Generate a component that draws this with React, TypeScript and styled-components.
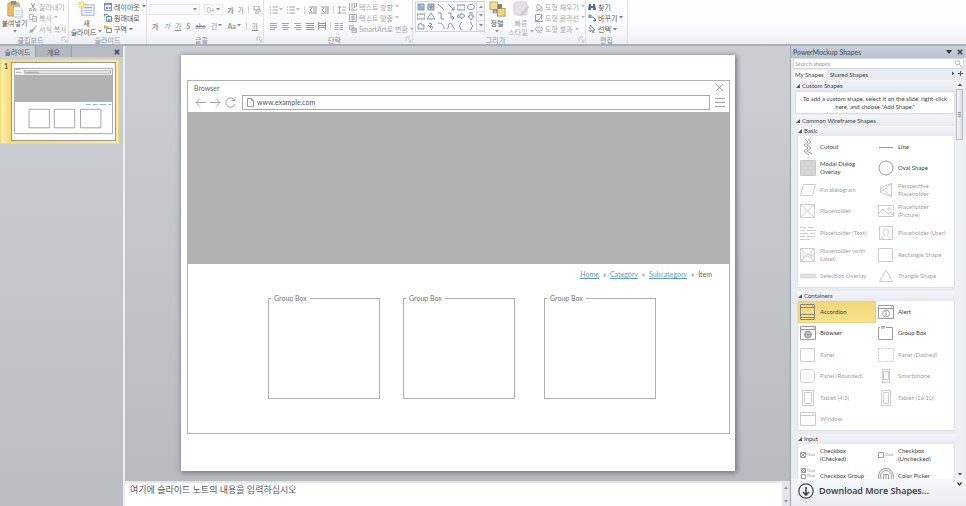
import React from "react";
import styled, { createGlobalStyle } from "styled-components";

const UI = `Lato, "Open Sans", "Noto Sans CJK KR", sans-serif`;
const KR = `Lato, "Noto Sans CJK KR", sans-serif`;

const Global = createGlobalStyle`
  * { box-sizing: border-box; }
  html, body, #root { height: 100%; margin: 0; }
  body { font: 7px/8px ${KR}; color: #444; overflow: hidden; }
  button, input, select { font: inherit; color: inherit; border: 0; padding: 0; margin: 0; background: none; border-radius: 0; }
  svg { display: block; flex: none; }
`;

const Shell = styled.div`
  display: flex;
  flex-direction: column;
  height: 100vh;
  background: #c6cacf;
`;

/* ---------- ribbon ---------- */
const Ribbon = styled.header`
  display: flex;
  height: 46px;
  flex: none;
  background: linear-gradient(#ffffff, #fbfcfd 60%, #eceff3);
  border-bottom: 2px solid #a9b0ba;
`;
const Group = styled.section<{ $w: number }>`
  width: ${(p) => p.$w}px;
  flex: none;
  display: flex;
  flex-direction: column;
  border-right: 1px solid #dcdfe4;
`;
const GroupBody = styled.div<{ $gap?: number }>`
  flex: 1;
  display: flex;
  gap: ${(p) => p.$gap ?? 2}px;
  padding: 1px 2px 0;
  min-height: 0;
`;
const GroupLabel = styled.div`
  height: 9px;
  display: flex;
  align-items: center;
  justify-content: center;
  color: #8a8f98;
  & > span { flex: 1; text-align: center; }
`;
const Launcher = styled.button`
  width: 7px;
  height: 7px;
`;
const Big = styled.button<{ $w: number; $off?: boolean }>`
  width: ${(p) => p.$w}px;
  flex: none;
  display: flex;
  flex-direction: column;
  align-items: center;
  justify-content: flex-start;
  white-space: nowrap;
  color: ${(p) => (p.$off ? "#a9a9a9" : "#525252")};
`;
const Line = styled.span`
  display: flex;
  flex: none;
  align-items: center;
  gap: 2px;
  height: 9px;
`;
const Stack = styled.div`
  flex: 1;
  display: grid;
  grid-template-rows: repeat(3, 1fr);
  min-width: 0;
`;
const Small = styled.button<{ $off?: boolean }>`
  display: flex;
  align-items: center;
  gap: 2px;
  white-space: nowrap;
  color: ${(p) => (p.$off ? "#a6a6a6" : "#525252")};
`;
const Rows = styled.div<{ $w: number }>`
  width: ${(p) => p.$w}px;
  flex: none;
  display: flex;
  flex-direction: column;
  gap: 3px;
  padding-top: 2px;
`;
const Tools = styled.div<{ $gap: number; $pad?: number }>`
  display: flex;
  align-items: center;
  gap: ${(p) => p.$gap}px;
  padding-left: ${(p) => p.$pad ?? 0}px;
  height: 13px;
`;
const Tool = styled.button<{ $bold?: boolean; $italic?: boolean; $under?: boolean; $strike?: boolean }>`
  display: flex;
  align-items: center;
  gap: 1px;
  color: #8c8c8c;
  font-weight: ${(p) => (p.$bold ? 700 : 400)};
  font-style: ${(p) => (p.$italic ? "italic" : "normal")};
  text-decoration: ${(p) => (p.$under ? "underline" : p.$strike ? "line-through" : "none")};
`;
const Sep = styled.i`
  width: 1px;
  height: 8px;
  background: #d0d3d8;
`;
const Combo = styled.button<{ $w: number }>`
  width: ${(p) => p.$w}px;
  height: 11px;
  border: 1px solid #e6e8eb;
  background: #fafafa;
  color: #aaa;
  display: flex;
  align-items: center;
  justify-content: space-between;
  padding: 0 2px;
`;
const Gallery = styled.div`
  display: flex;
  width: 70px;
  height: 31px;
  border: 1px solid #d2d6dc;
  background: #fff;
`;
const GalleryGrid = styled.div`
  flex: 1;
  display: grid;
  grid-template-columns: repeat(6, 1fr);
  place-items: center;
`;
const GalleryScroll = styled.div`
  width: 8px;
  display: grid;
  grid-template-rows: repeat(3, 1fr);
  border-left: 1px solid #d2d6dc;
  background: #f3f5f8;
  & > button { display: grid; place-items: center; border-bottom: 1px solid #dfe2e7; }
`;

const Down = ({ c = "#888" }: { c?: string }) => (
  <svg width="4" height="3" viewBox="0 0 4 3"><path d="M0 0h4L2 2.5z" fill={c} /></svg>
);
const Up = ({ c = "#8b929c" }: { c?: string }) => (
  <svg width="4" height="3" viewBox="0 0 4 3"><path d="M0 3h4L2 .5z" fill={c} /></svg>
);

const PasteIcon = () => (
  <svg width="17" height="17" viewBox="0 0 18 18">
    <rect x="2" y="2" width="12" height="14" rx="1" fill="#edbd62" stroke="#c99744" />
    <rect x="5" y="0" width="6" height="4" rx="1" fill="#8e8e90" />
    <path d="M8 6h6l3 3v8H8z" fill="#fff" stroke="#a3abb8" strokeWidth=".8" />
    <path d="M10 10h5M10 12h5M10 14h5" stroke="#c3cfdf" strokeWidth=".8" />
  </svg>
);
const NewSlideIcon = () => (
  <svg width="17" height="17" viewBox="0 0 18 18">
    <rect x="4" y="4" width="13" height="11" fill="#f3f7fc" stroke="#9cadc4" />
    <path d="M6 7h9" stroke="#c4a578" strokeWidth="1.4" />
    <path d="M6 10h9M6 12h9" stroke="#a8c1df" />
    <path d="M4 0v8M0 4h8M1 1l6 6M7 1L1 7" stroke="#f6d566" strokeWidth="1.4" />
    <circle cx="4" cy="4" r="1.500" fill="#fffbe0" />
  </svg>
);
const ArrangeIcon = () => (
  <svg width="17" height="17" viewBox="0 0 18 18">
    <path d="M6 4h7v7" fill="none" stroke="#8a8a8a" strokeWidth="1.6" />
    <rect x="4" y="4" width="9" height="9" fill="#7c7f84" />
    <rect x="1" y="1" width="8" height="8" fill="#f7e08a" stroke="#a6975a" strokeWidth=".8" />
    <rect x="9" y="8" width="8" height="8" fill="#f3d772" stroke="#988c50" strokeWidth=".8" />
    <rect x="5" y="10" width="3" height="3" fill="#a9bdd6" />
  </svg>
);
const QuickIcon = () => (
  <svg width="17" height="17" viewBox="0 0 18 18">
    <rect x="1" y="1" width="14" height="14" rx="3" fill="#e3e1e5" stroke="#d0ced3" />
    <path d="M16 5l-7 8-2 3 4-2 6-7z" fill="#c9c7cb" />
  </svg>
);

const glyphs: Record<string, React.ReactNode> = {
  cut: <path d="M2 0l3 5M6 0L3 5M2 5.500a1.300 1.300 0 100 2.500 1.300 1.300 0 000-2.500M6 5.500a1.300 1.300 0 100 2.500 1.300 1.300 0 000-2.500" fill="none" stroke="#9a9a9a" />,
  copy: <g fill="#fafafa" stroke="#a8a8a8" strokeWidth=".8"><path d="M.5.500h4v5h-4z" /><path d="M3.500 2.500h4v5h-4zM4.500 4.500h2M4.500 6h2" /></g>,
  brush: <path d="M8 0L4 4 1 5l-1 3 4-1 1-2 3-4z" fill="#a9a9a9" />,
  layout: <g><path d="M.5.500h7v7h-7z" fill="#eaf1fa" stroke="#7f98bb" /><path d="M0 1h8" stroke="#5f7fab" strokeWidth="1.500" /><path d="M2 4h2v2H2zM5 4h1.500v2H5z" fill="#6b91bf" /></g>,
  reset: <g><path d="M2.500 2.500h5v5h-5z" fill="#e6eef8" stroke="#6b87ad" /><path d="M0 3V0l1 1c2-1 4 0 4 2" fill="none" stroke="#2f6fb5" /><path d="M4 5h2v2H4z" fill="#7fa0c8" /></g>,
  section: <g><path d="M2.500 3.500h5v4h-5z" fill="#f7fafe" stroke="#7f93ad" /><path d="M0 1h5v2H0z" fill="#f2c542" /><path d="M1 0v4" stroke="#d99d2b" /></g>,
  dir: <path d="M.5 0v8M3 0v8M5.500 0v5M4 6l1.500 2L7.500 6M7.500 0v4" fill="none" stroke="#a0a0a0" />,
  fit: <path d="M.5.500h7v7h-7zM2 3h4M2 5h4M4 1v6" fill="#f1f1f1" stroke="#adadad" />,
  smart: <g stroke="#a8a8a8" strokeWidth=".8"><path d="M.5.500h4v4h-4zM3 3h4.500v4.500H3z" fill="#ddd" /><path d="M4 5h3" /></g>,
  fill: <g fill="#e9e9e9" stroke="#a9a9a9" strokeWidth=".8"><path d="M3 1l4 3-3 3-3-3zM7 4v3M.5 7.500h7" /></g>,
  outline: <path d="M.5.500h6v5M.5.500v6h3M7.500 1L3 6M0 7.500h8" fill="none" stroke="#a2a2a2" />,
  effect: <g><rect x=".5" y="2" width="7" height="4" rx="2" fill="#eee" stroke="#aaa" /><path d="M2 7.500h5" stroke="#c8c8c8" /></g>,
  find: <g fill="#4c6d9c"><path d="M1 1h2v2h2V1h2l1 6H5V5H3v2H0z" /></g>,
  replace: <g fill="none"><path d="M1 4V1h2v3M1 3h2" stroke="#666" strokeWidth=".9" /><path d="M4 3c2 0 3 1 3 4M5 6l2 1.500L8 5" stroke="#3f77b6" /></g>,
  select: <path d="M2 0v7l1.700-1.600L5 8l1-.5L4.800 5H7z" fill="#fff" stroke="#5b7392" strokeWidth=".8" />,
  bullets: <path d="M0 1h1M0 4h1M0 7h1M2.500 1H8M2.500 4H8M2.500 7H8" stroke="#a3a3a3" />,
  indent: <path d="M0 1h8M4 3h4M4 5h4M0 7h8M3 2L1 4l2 2" fill="none" stroke="#959595" />,
  spacing: <path d="M1.500 0v8M0 2l1.500-2L3 2M0 6l1.500 2L3 6M4 1h4M4 4h4M4 7h4" fill="none" stroke="#a0a0a0" strokeWidth=".9" />,
  lines: <path d="M0 1.500h7M0 3.500h7M0 5.500h7M0 7.500h5" stroke="#a4a4a4" />,
  center: <path d="M0 1.500h7M1 3.500h5M0 5.500h7M1 7.500h5" stroke="#a4a4a4" />,
  right: <path d="M0 1.500h7M2 3.500h5M0 5.500h7M2 7.500h5" stroke="#a4a4a4" />,
  full: <path d="M0 1.500h8M0 3.500h8M0 5.500h8M0 7.500h8" stroke="#969696" strokeWidth="1.200" />,
  dist: <path d="M.5 0v8M7.500 0v8M1 1.500h6M1 3.500h6M1 5.500h6" stroke="#969696" />,
  cols: <path d="M0 1.500h3.500M0 3.500h3.500M0 5.500h3.500M0 7.500h3.500M4.500 1.500H8M4.500 3.500H8M4.500 5.500H8M4.500 7.500H8" stroke="#a8a8a8" />,
  erase: <g><path d="M1 0h5v4H1z" fill="none" stroke="#a3a3a3" /><path d="M4 4l3-1 1 2-4 3-2-1z" fill="#ddd" stroke="#a3a3a3" strokeWidth=".7" /></g>,
  launch: <path d="M1 5V1h4M3 3l3 3M6 3.500V6H3.500" fill="none" stroke="#b9bec6" strokeWidth=".8" />,
};
const G = ({ n }: { n: string }) => <svg width="8" height="8" viewBox="0 0 8 8">{glyphs[n]}</svg>;

const galleryShapes = [
  "M1 1h6v6H1zM2 3h2M2 5h4", "M1 1h6v6H1zM4 2v4M2 4h4", "M1 1l6 6", "M1 1l6 6M7 4v3H4", "M0 2h8v5H0z", "M4 1.500c5 0 5 5 0 5s-5-5 0-5",
  "M0 2h8v5H0z", "M4 1l4 6H0z", "M1 1h3v6h3", "M1 1h3v5h3M5 4l2 2-2 2", "M0 3h4V1l4 3-4 3V5H0z", "M3 0h2v4h2L4 8 1 4h2z",
  "M1 7V3l3-2 1 2h2v4z", "M2 1l3 1-2 2 3 1-2 3M1 3l3 3", "M1 1c4 0 6 2 6 6", "M0 7c2 0 1-6 3-6s3 6 5 6", "M5 0C3 0 4 4 2 4c2 0 1 4 3 4", "M3 0c2 0 1 4 3 4-2 0-1 4-3 4",
];
const openShapes = [2, 3, 8, 9, 14, 15, 16, 17];

const StackBtn = ({ n, t, off, arrow }: { n: string; t: string; off?: boolean; arrow?: boolean }) => (
  <Small $off={off}><G n={n} /><span>{t}</span>{arrow && <Down c={off ? "#bbb" : "#777"} />}</Small>
);
const Label = ({ t, launch }: { t: string; launch?: boolean }) => (
  <GroupLabel><span>{t}</span>{launch && <Launcher aria-label={t}><svg width="7" height="7" viewBox="0 0 7 7">{glyphs.launch}</svg></Launcher>}</GroupLabel>
);

/* ---------- workspace ---------- */
const Workspace = styled.main`
  flex: 1;
  display: flex;
  min-height: 0;
`;
const Outline = styled.aside`
  width: 123px;
  flex: none;
  background: linear-gradient(#ccd0d5, #babdc2);
`;
const OutlineTabs = styled.div`
  height: 11px;
  display: flex;
  background: #b6bbc3;
`;
const OutlineTab = styled.button<{ $on?: boolean; $w: number }>`
  width: ${(p) => p.$w}px;
  background: ${(p) => (p.$on ? "#cdd1d7" : "#b1b7bf")};
  border-right: 1px solid #959ca6;
  color: #4c525b;
`;
const TabClose = styled.button`
  margin-left: auto;
  width: 12px;
  display: grid;
  place-items: center;
`;
const ThumbRow = styled.div`
  margin: 2px 4px 0 0;
  height: 85px;
  padding: 2px;
  display: flex;
  border: 1px solid #f0d979;
  background: linear-gradient(90deg, #fdf0b4, #f8da74 8%, #fbe9a8);
`;
const ThumbNo = styled.span`
  width: 8px;
  font-weight: 700;
  color: #555;
  padding: 0 0 0 1px;
`;
const Thumb = styled.div`
  flex: 1;
  background: #fff;
  border: 1px solid #979797;
  & > svg { width: 100%; height: 100%; }
`;
const Center = styled.div`
  flex: 1;
  min-width: 0;
  display: flex;
  flex-direction: column;
  border-left: 2px solid #eceef0;
  border-right: 1px solid #9ea4ac;
`;
const Canvas = styled.div`
  flex: 1;
  display: flex;
  min-height: 0;
  padding: 9px 55px 10px 56px;
  background: linear-gradient(#cbcfd4, #b8bbc0);
`;
const Slide = styled.article`
  flex: 1;
  display: flex;
  padding: 25px 5px 37px 6px;
  background: #fff;
  box-shadow: 1px 1px 5px 1px #777c82;
`;
const Browser = styled.section`
  flex: 1;
  display: flex;
  flex-direction: column;
  border: 1px solid #b0b0b0;
  font-family: ${UI};
  color: #666;
`;
const TitleBar = styled.div`
  height: 13px;
  display: flex;
  align-items: center;
  justify-content: space-between;
  padding: 0 5px 0 6px;
`;
const AddressBar = styled.div`
  height: 18px;
  display: flex;
  align-items: center;
  padding: 0 4px 2px 7px;
  gap: 5px;
`;
const Nav = styled.div`
  display: flex;
  gap: 4px;
  width: 42px;
`;
const Address = styled.label`
  flex: 1;
  height: 15px;
  display: flex;
  align-items: center;
  gap: 3px;
  padding-left: 4px;
  border: 1px solid #a9a9a9;
  & > input { flex: 1; outline: 0; color: #555; }
`;
const Hero = styled.div`
  height: 152px;
  background: #b2b2b2;
`;
const Crumbs = styled.nav`
  display: flex;
  justify-content: flex-end;
  gap: 4px;
  padding: 6px 17px 0 0;
  & > a { color: #5f9cc5; }
`;
const Boxes = styled.div`
  display: grid;
  grid-template-columns: 135fr 141fr 112fr;
  padding: 16px 73px 0 80px;
`;
const Box = styled.fieldset`
  width: 112px;
  height: 105px;
  margin: 0;
  padding: 0 2px;
  border: 1px solid #aeaeae;
  & > legend { padding: 0 3px; line-height: 9px; color: #757575; }
`;
const Notes = styled.div`
  height: 25px;
  flex: none;
  display: flex;
  background: #fff;
  border-top: 2px solid #e4e7ea;
  & > p { flex: 1; margin: 0; padding: 1px 5px; font-size: 9px; line-height: 12px; color: #555; }
`;
const NotesScroll = styled.div`
  width: 8px;
  background: #e3e6ea;
  display: flex;
  flex-direction: column;
  justify-content: space-between;
  align-items: center;
  padding: 3px 0;
`;

/* ---------- shapes pane ---------- */
const Pane = styled.aside`
  width: 175px;
  flex: none;
  display: flex;
  flex-direction: column;
  background: #e9edf2;
  font-family: ${UI};
  font-size: 6px;
  color: #3c3c3c;
`;
const PaneTitle = styled.div`
  height: 12px;
  display: flex;
  align-items: center;
  gap: 5px;
  padding: 0 3px 0 2px;
  background: linear-gradient(#c9d0da, #bac3cf);
  color: #3b4b61;
  font-size: 7px;
  & > span { flex: 1; }
`;
const Search = styled.label`
  height: 11px;
  margin: 0 2px;
  display: flex;
  align-items: center;
  background: #fff;
  border: 1px solid #d3d8df;
  padding: 0 1px;
  & > input { flex: 1; outline: 0; font-style: italic; }
  & > input::placeholder { color: #a0a0a0; opacity: 1; }
`;
const PaneTabs = styled.div`
  height: 11px;
  display: flex;
  align-items: stretch;
  padding: 1px 3px 0 2px;
  & > i { flex: 1; }
`;
const PaneTab = styled.button<{ $on?: boolean }>`
  padding: 0 2px;
  background: ${(p) => (p.$on ? "#fbfcfd" : "transparent")};
  margin-right: 2px;
`;
const ListArea = styled.div`
  flex: 1;
  min-height: 0;
  display: flex;
  padding: 0 2px 0 4px;
`;
const List = styled.div`
  flex: 1;
  min-width: 0;
  overflow: hidden;
`;
const Head = styled.button<{ $in?: boolean }>`
  width: ${(p) => (p.$in ? "calc(100% - 2px)" : "100%")};
  height: ${(p) => (p.$in ? 10 : 11)}px;
  margin-left: ${(p) => (p.$in ? 2 : 0)}px;
  display: flex;
  align-items: center;
  gap: 2px;
  padding: 0 1px;
  background: linear-gradient(#f4f6f9, #e6eaf0);
`;
const Hint = styled.p`
  margin: 0 0 1px;
  padding: 3px 0;
  height: 23px;
  background: #fff;
  border: 1px solid #d9dee5;
  text-align: center;
`;
const Items = styled.div<{ $h: number }>`
  height: ${(p) => p.$h}px;
  margin: 0 0 3px 2px;
  display: grid;
  grid-template-columns: 1fr 1fr;
  grid-auto-rows: 1fr;
  background: #fff;
  border: 1px solid #dde2e8;
  border-top: 0;
`;
const Item = styled.button<{ $dim?: boolean; $on?: boolean }>`
  display: flex;
  align-items: center;
  gap: 4px;
  padding: 0 0 0 2px;
  min-width: 0;
  text-align: left;
  line-height: 8px;
  background: ${(p) => (p.$on ? "linear-gradient(#f3d679, #fae38f)" : "none")};
  box-shadow: ${(p) => (p.$on ? "inset 0 0 0 1px #ecd077" : "none")};
  & > * { opacity: ${(p) => (p.$dim ? 0.5 : 1)}; }
  & > span { white-space: pre-line; }
`;
const Scroll = styled.div`
  width: 9px;
  display: flex;
  flex-direction: column;
  align-items: center;
  background: #eef1f4;
  padding: 3px 0;
`;
const Knob = styled.div`
  width: 7px;
  height: 51px;
  margin: 3px 0 auto;
  border: 1px solid #b4bac3;
  background: linear-gradient(90deg, #f7f8fa, #d9dde3);
  display: grid;
  place-items: center;
`;
const More = styled.button`
  height: 27px;
  flex: none;
  display: flex;
  align-items: center;
  gap: 5px;
  padding: 0 4px 3px 7px;
  font-family: "Open Sans", sans-serif;
  font-size: 9px;
  font-weight: 600;
  color: #333;
  background: linear-gradient(#f5f7f9, #e9edf2);
  & > span { flex: 1; text-align: left; }
  & > svg:last-child { align-self: flex-start; margin-top: 3px; }
`;

const CheckWord = ({ y }: { y: number }) => (
  <text x="7" y={y} fontSize="3" fill="#8a8a8a" stroke="none" fontFamily="Lato">Check</text>
);
const shapes: Record<string, React.ReactNode> = {
  cutout: <path d="M5 0l3 3-4 3 4 3-4 3 5 4M8 0l3 3-4 3 4 3-4 3 5 3" />,
  line: <path d="M1 8.500h14" />,
  modal: <path d="M.5.500h15v15H.5z" fill="#d4d4d4" stroke="#cbcbcb" />,
  oval: <circle cx="8" cy="8" r="7" />,
  para: <path d="M3.500 2.500h12l-3 11H.5z" />,
  persp: <path d="M2.500 5.500l11-4v13l-11-4zM2.500 5.500l11 9M2.500 10.500l11-9" />,
  ph: <path d="M.5 1.500h14v13H.5zM.5 1.500l14 13M14.500 1.500l-14 13" />,
  pic: <><path d="M.5 2.500h15v11H.5zM1 10l4-4 5 5 2-2 3 3" /><circle cx="11" cy="6" r="1.200" /></>,
  text: <path d="M0 2.500h6M8 2.500h6M0 5.500h5M7 5.500h9M0 8.500h8M10 8.500h5M0 11.500h5M7 11.500h8M0 14.500h10" />,
  user: <path d="M1.500 1.500h13v13h-13zM4 14c0-3 3-2 3-4-2-1-2-6 1-6s3 5 1 6c0 2 3 1 3 4" />,
  lab: <><path d="M.5 1.500h14v13H.5zM1 2l4 4M14 2l-4 4M1 14l4-4M14 14l-4-4" /><text x="8" y="10" fontSize="5" textAnchor="middle" fill="#777" stroke="none" fontFamily="Lato">Label</text></>,
  rect: <path d="M.5 1.500h14v13H.5z" />,
  sel: <path d="M.5 6h15v4H.5z" fill="#c4c4c4" stroke="#b9b9b9" />,
  tri: <path d="M8 2l6.500 11.500h-13z" />,
  acc: <path d="M.5.500h14v15H.5zM.5 3.500h14M.5 10.500h14M.5 13.500h14M12 2h1" stroke="#858585" />,
  alert: <><path d="M.5 1.500h15v13H.5zM.5 4.500h15M13 3h1" /><circle cx="8" cy="9.500" r="3.500" /><path d="M8 7v1M8 8.500v3" strokeWidth="1.300" /></>,
  browser: <><path d="M.5 1.500h15v13H.5zM.5 4.500h15M13 3h1" /><circle cx="8" cy="9.500" r="3.500" fill="#ccc" /><path d="M4.500 9.500h7M8 6v7M6 7c-.8 2-.8 4 0 5M10 7c.8 2 .8 4 0 5" strokeWidth=".8" /></>,
  group: <path d="M2 2.500H.5v12h14v-12H8M3 1.500h4M3 3h4" />,
  dashed: <path d="M.5 1.500h15v13H.5z" strokeDasharray="2 1" />,
  round: <rect x=".5" y="1.500" width="14" height="13" rx="3" />,
  phone: <path d="M4.500 1.500h7v13h-7zM5.500 3.500h5v8h-5zM7.500 13h1" />,
  tablet: <path d="M2.500.500h11v15h-11zM4.500 2.500h7v11h-7z" />,
  tablet2: <path d="M3.500.500h9v15h-9zM5.500 2.500h5v11h-5z" />,
  window: <path d="M.5 1.500h15v13H.5zM.5 4.500h15M13 3h1" />,
  chk: <><path d="M.5 5.500h5v5h-5zM1 6l4 4M5 6l-4 4" /><CheckWord y={9} /></>,
  unchk: <><path d="M.5 5.500h5v5h-5z" /><CheckWord y={9} /></>,
  chkg: <><path d="M1.500.500h4v4h-4zM2 1l3 3M5 1L2 4M1.500 6.500h4v4h-4z" /><CheckWord y={4} /><CheckWord y={9} /></>,
  color: <><circle cx="8" cy="8" r="7.500" /><circle cx="8" cy="8" r="5.500" /><path d="M5.500 13V6.500h5V13M8 6v6" /></>,
};

type Entry = [string, string, boolean?];
const basic: Entry[] = [
  ["cutout", "Cutout"], ["line", "Line"], ["modal", "Modal Dialog\nOverlay"], ["oval", "Oval Shape"],
  ["para", "Parallelogram", true], ["persp", "Perspective\nPlaceholder", true], ["ph", "Placeholder", true], ["pic", "Placeholder\n(Picture)", true],
  ["text", "Placeholder (Text)", true], ["user", "Placeholder (User)", true], ["lab", "Placeholder (with\nLabel)", true], ["rect", "Rectangle Shape", true],
  ["sel", "Selection Overlay", true], ["tri", "Triangle Shape", true],
];
const containers: Entry[] = [
  ["acc", "Accordion"], ["alert", "Alert"], ["browser", "Browser"], ["group", "Group Box"],
  ["rect", "Panel", true], ["dashed", "Panel (Dashed)", true], ["round", "Panel (Rounded)", true], ["phone", "Smartphone", true],
  ["tablet", "Tablet (4:3)", true], ["tablet2", "Tablet (16:10)", true], ["window", "Window", true],
];
const inputs: Entry[] = [
  ["chk", "Checkbox\n(Checked)"], ["unchk", "Checkbox\n(Unchecked)"], ["chkg", "Checkbox Group"], ["color", "Color Picker"],
];

const Heading = ({ t, inner }: { t: string; inner?: boolean }) => (
  <Head $in={inner}>
    <svg width="4" height="4" viewBox="0 0 4 4"><path d="M4 0v4H0z" fill="#555" /></svg>
    <span>{t}</span>
  </Head>
);
const ItemGrid = ({ list, h, selected }: { list: Entry[]; h: number; selected?: string }) => (
  <Items $h={h}>
    {list.map(([icon, text, dim]) => (
      <Item key={text} $dim={dim} $on={text === selected}>
        <svg width="16" height="16" viewBox="0 0 16 16" fill="none" stroke="#9a9a9a" strokeWidth="1">{shapes[icon]}</svg>
        <span>{text}</span>
      </Item>
    ))}
  </Items>
);
const Cross = ({ s, c, w = 1 }: { s: number; c: string; w?: number }) => (
  <svg width={s} height={s} viewBox="0 0 8 8" fill="none" stroke={c} strokeWidth={w}><path d="M1 1l6 6M7 1L1 7" /></svg>
);

export default function App() {
  return (
    <Shell>
      <Global />
      <Ribbon>
        <Group $w={69}>
          <GroupBody>
            <Big $w={25}><PasteIcon /><Line>붙여넣기</Line><Line><Down /></Line></Big>
            <Stack>
              <StackBtn n="cut" t="잘라내기" off />
              <StackBtn n="copy" t="복사" off arrow />
              <StackBtn n="brush" t="서식 복사" off />
            </Stack>
          </GroupBody>
          <Label t="클립보드" launch />
        </Group>
        <Group $w={78}>
          <GroupBody>
            <Big $w={31}><NewSlideIcon /><Line>새</Line><Line>슬라이드<Down /></Line></Big>
            <Stack>
              <StackBtn n="layout" t="레이아웃" arrow />
              <StackBtn n="reset" t="원래대로" />
              <StackBtn n="section" t="구역" arrow />
            </Stack>
          </GroupBody>
          <Label t="슬라이드" />
        </Group>
        <Group $w={117}>
          <GroupBody>
            <Rows $w={112}>
              <Tools $gap={4}>
                <Combo $w={53} aria-label="글꼴"><span /><Down /></Combo>
                <Combo $w={20} aria-label="글꼴 크기"><span>0+</span><Down /></Combo>
                <Tool $bold>가</Tool><Tool>가</Tool><Sep /><Tool aria-label="서식 지우기"><G n="erase" /></Tool>
              </Tools>
              <Tools $gap={5} $pad={3}>
                <Tool $bold>가</Tool><Tool $italic>가</Tool><Tool $under>가</Tool><Tool $bold>S</Tool>
                <Tool $strike>abc</Tool><Tool>간<Down /></Tool><Tool $bold>Aa<Down /></Tool><Sep /><Tool $under>가</Tool>
              </Tools>
            </Rows>
          </GroupBody>
          <Label t="글꼴" launch />
        </Group>
        <Group $w={149}>
          <GroupBody $gap={2}>
            <Rows $w={81}>
              <Tools $gap={4} $pad={4}>
                <Tool aria-label="글머리 기호"><G n="bullets" /><Down c="#bbb" /></Tool><Tool aria-label="번호 매기기"><G n="bullets" /><Down c="#bbb" /></Tool><Sep />
                <Tool aria-label="내어쓰기"><G n="indent" /></Tool><Tool aria-label="들여쓰기"><G n="indent" /></Tool><Sep /><Tool aria-label="줄 간격"><G n="spacing" /></Tool>
              </Tools>
              <Tools $gap={4} $pad={4}>
                {["lines", "center", "right", "full", "dist"].map((n) => <Tool key={n} aria-label={n}><G n={n} /></Tool>)}
                <Sep /><Tool aria-label="단"><G n="cols" /></Tool>
              </Tools>
            </Rows>
            <Stack>
              <StackBtn n="dir" t="텍스트 방향" off arrow />
              <StackBtn n="fit" t="텍스트 맞춤" off arrow />
              <StackBtn n="smart" t="SmartArt로 변환" off arrow />
            </Stack>
          </GroupBody>
          <Label t="단락" launch />
        </Group>
        <Group $w={173}>
          <GroupBody>
            <Gallery>
              <GalleryGrid>
                {galleryShapes.map((d, i) => (
                  <svg key={i} width="8" height="8" viewBox="0 0 8 8" fill={i < 2 ? "#b9cbe2" : "#f5f9fe"} fillOpacity={openShapes.includes(i) ? 0 : 1} stroke="#6f86a6" strokeWidth=".9"><path d={d} /></svg>
                ))}
              </GalleryGrid>
              <GalleryScroll>
                <button aria-label="위로"><Up /></button><button aria-label="아래로"><Down /></button><button aria-label="자세히"><Down /></button>
              </GalleryScroll>
            </Gallery>
            <Big $w={20}><ArrangeIcon /><Line>정렬</Line><Line><Down /></Line></Big>
            <Big $w={24} $off><QuickIcon /><Line>빠른</Line><Line>스타일<Down c="#aaa" /></Line></Big>
            <Stack>
              <StackBtn n="fill" t="도형 채우기" off arrow />
              <StackBtn n="outline" t="도형 윤곽선" off arrow />
              <StackBtn n="effect" t="도형 효과" off arrow />
            </Stack>
          </GroupBody>
          <Label t="그리기" launch />
        </Group>
        <Group $w={42}>
          <GroupBody>
            <Stack>
              <StackBtn n="find" t="찾기" />
              <StackBtn n="replace" t="바꾸기" arrow />
              <StackBtn n="select" t="선택" arrow />
            </Stack>
          </GroupBody>
          <Label t="편집" />
        </Group>
      </Ribbon>

      <Workspace>
        <Outline>
          <OutlineTabs>
            <OutlineTab $on $w={36}>슬라이드</OutlineTab>
            <OutlineTab $w={36}>개요</OutlineTab>
            <TabClose aria-label="닫기"><Cross s={6} c="#444" w={2} /></TabClose>
          </OutlineTabs>
          <ThumbRow>
            <ThumbNo>1</ThumbNo>
            <Thumb>
              <svg viewBox="0 0 106 79" preserveAspectRatio="none" fill="none" stroke="#8d8d8d" strokeWidth=".8">
                <path d="M2.500 5.500h101v67h-101z" />
                <path d="M12.500 8h89v2.500h-89zM4 9.500h6M14 9.500h14M102 7l1 1M3.500 6.500h5" />
                <path d="M2.500 12h101v28h-101z" fill="#b2b2b2" stroke="none" />
                <path d="M76 42.500h5M83 42.500h5M90 42.500h7" stroke="#5f9cc5" />
                <path d="M99 42.500h3" />
                <path d="M17.500 47.500h21v19h-21zM43.500 47.500h21v19h-21zM70.500 47.500h21v19h-21z" />
              </svg>
            </Thumb>
          </ThumbRow>
        </Outline>

        <Center>
          <Canvas>
            <Slide>
              <Browser>
                <TitleBar><span>Browser</span><Cross s={9} c="#a8a8a8" /></TitleBar>
                <AddressBar>
                  <Nav>
                    <svg width="11" height="11" viewBox="0 0 11 11" fill="none" stroke="#a2a2a2"><path d="M11 5.500H1M5 1.500l-4 4 4 4" /></svg>
                    <svg width="11" height="11" viewBox="0 0 11 11" fill="none" stroke="#a2a2a2"><path d="M0 5.500h10M6 1.500l4 4-4 4" /></svg>
                    <svg width="11" height="11" viewBox="0 0 11 11" fill="none" stroke="#a2a2a2"><path d="M9.500 3A4.700 4.700 0 1010 7M10 0v3.500H6.500" /></svg>
                  </Nav>
                  <Address>
                    <svg width="7" height="9" viewBox="0 0 7 9" fill="none" stroke="#8c8c8c" strokeWidth=".9"><path d="M.5.500h4l2 2v6h-6zM4.500.500v2h2" /></svg>
                    <input aria-label="Address" defaultValue="www.example.com" />
                  </Address>
                  <svg width="10" height="9" viewBox="0 0 10 9" stroke="#a2a2a2"><path d="M0 .5h10M0 4.500h10M0 8.500h10" /></svg>
                </AddressBar>
                <Hero />
                <Crumbs>
                  <a href="#home">Home</a><span>»</span><a href="#category">Category</a><span>»</span><a href="#subcategory">Subcategory</a><span>»</span><span>Item</span>
                </Crumbs>
                <Boxes>
                  {[1, 2, 3].map((n) => <Box key={n}><legend>Group Box</legend></Box>)}
                </Boxes>
              </Browser>
            </Slide>
          </Canvas>
          <Notes>
            <p>여기에 슬라이드 노트의 내용을 입력하십시오</p>
            <NotesScroll><Up /><Down c="#8b929c" /></NotesScroll>
          </Notes>
        </Center>

        <Pane>
          <PaneTitle>
            <span>PowerMockup Shapes</span>
            <svg width="6" height="4" viewBox="0 0 6 4"><path d="M0 0h6L3 4z" fill="#333" /></svg>
            <Cross s={6} c="#444" w={2} />
          </PaneTitle>
          <Search>
            <input aria-label="Search shapes" placeholder="Search shapes" />
            <svg width="7" height="7" viewBox="0 0 7 7" fill="none" stroke="#aaa" strokeWidth=".9"><circle cx="2.700" cy="2.700" r="2.200" /><path d="M4.500 4.500L7 7" /></svg>
          </Search>
          <PaneTabs>
            <PaneTab $on>My Shapes</PaneTab><PaneTab>Shared Shapes</PaneTab><i />
            <svg width="12" height="8" viewBox="0 0 12 8"><path d="M1 1.500v4l2.500-2z" fill="#555" /><path d="M9.500 1v5M7 3.500h5" stroke="#555" /></svg>
          </PaneTabs>
          <ListArea>
            <List>
              <Heading t="Custom Shapes" />
              <Hint>To add a custom shape, select it on the slide, right-click<br />here, and choose "Add Shape."</Hint>
              <Heading t="Common Wireframe Shapes" />
              <Heading t="Basic" inner />
              <ItemGrid list={basic} h={152} />
              <Heading t="Containers" inner />
              <ItemGrid list={containers} h={130} selected="Accordion" />
              <Heading t="Input" inner />
              <ItemGrid list={inputs} h={44} />
            </List>
            <Scroll>
              <Up c="#444" />
              <Knob><svg width="3" height="5" viewBox="0 0 3 5" stroke="#8b929c"><path d="M0 .5h3M0 2.500h3M0 4.500h3" /></svg></Knob>
              <Down c="#444" />
            </Scroll>
          </ListArea>
          <More>
            <svg width="16" height="16" viewBox="0 0 16 16" fill="none" stroke="#444" strokeWidth="1.200"><circle cx="8" cy="8" r="7.200" /><path d="M8 4v8M5 9l3 3 3-3" strokeWidth="1.600" /></svg>
            <span>Download More Shapes...</span>
            <svg width="5" height="4" viewBox="0 0 5 4" fill="none" stroke="#333" strokeWidth="1.300"><path d="M.5.500l2 2.500 2-2.500" /></svg>
          </More>
        </Pane>
      </Workspace>
    </Shell>
  );
}
